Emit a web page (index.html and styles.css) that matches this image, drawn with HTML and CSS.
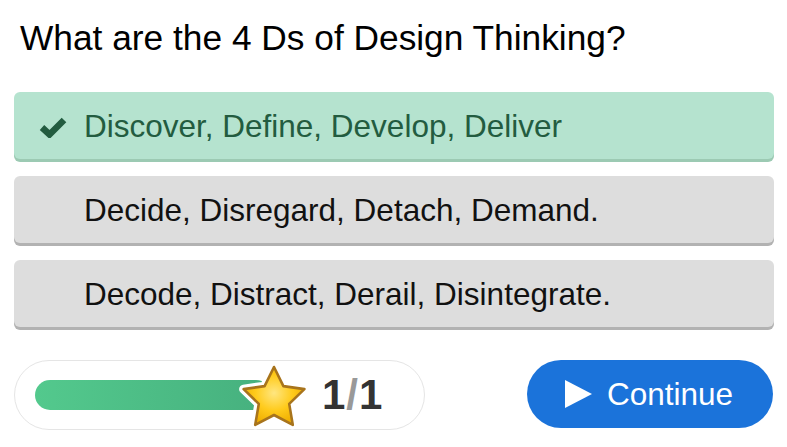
FILE: index.html
```html
<!DOCTYPE html>
<html>
<head>
<meta charset="utf-8">
<link rel="stylesheet" href="styles.css">
</head>
<body>
<div class="quiz">
  <h1 class="question">What are the 4 Ds of Design Thinking?</h1>
  <div class="options">
    <div class="option correct">
      <svg class="check" width="28" height="22" viewBox="0 0 28 22"><polyline points="3,11.5 10.5,18.5 25,4" fill="none" stroke="#235c40" stroke-width="6.5" stroke-linejoin="miter" stroke-linecap="butt"/></svg>
      <span>Discover, Define, Develop, Deliver</span>
    </div>
    <div class="option"><span>Decide, Disregard, Detach, Demand.</span></div>
    <div class="option"><span>Decode, Distract, Derail, Disintegrate.</span></div>
  </div>
  <div class="footer">
    <div class="progress">
      <div class="bar"></div>
      <svg class="star" width="66" height="63" viewBox="0 0 66 63">
        <defs>
          <radialGradient id="sg" cx="50%" cy="45%" r="55%">
            <stop offset="0" stop-color="#ffe680"/>
            <stop offset="0.55" stop-color="#ffcb1c"/>
            <stop offset="1" stop-color="#efae00"/>
          </radialGradient>
        </defs>
        <path d="M33 2 L42.4 21.1 L63.4 24.1 L48.2 38.9 L51.8 59.9 L33 50 L14.2 59.9 L17.8 38.9 L2.6 24.1 L23.6 21.1 Z" fill="#fff" stroke="#fff" stroke-width="9" stroke-linejoin="round"/>
        <path d="M33 2 L42.4 21.1 L63.4 24.1 L48.2 38.9 L51.8 59.9 L33 50 L14.2 59.9 L17.8 38.9 L2.6 24.1 L23.6 21.1 Z" fill="url(#sg)" stroke="#a8741c" stroke-width="2.6" stroke-linejoin="round"/>
      </svg>
      <div class="count">1<span class="slash">/</span>1</div>
    </div>
    <button class="continue">
      <svg class="play" width="27" height="28" viewBox="0 0 27 28"><polygon points="0,0 27,14 0,28" fill="#fff"/></svg>
      <span>Continue</span>
    </button>
  </div>
</div>
</body>
</html>
```

FILE: styles.css
```css
html, body {
  margin: 0;
  padding: 0;
  background: #fff;
}
.quiz {
  width: 787px;
  box-sizing: border-box;
  padding: 18px 13px 0 14px;
  font-family: "Liberation Sans", Arial, sans-serif;
}
.question {
  margin: 0 0 34px 6px;
  font-size: 35.3px;
  line-height: 40px;
  font-weight: normal;
  color: #000;
}
.options {
  display: flex;
  flex-direction: column;
  gap: 17px;
}
.option {
  height: 67px;
  border-radius: 6px;
  background: #dddddd;
  box-shadow: 0 3px 0 #b2b2b2;
  display: flex;
  align-items: center;
  padding-left: 70px;
  font-size: 31.5px;
  color: #111;
}
.option span {
  position: relative;
  top: 1px;
}
.option.correct {
  background: #b5e3cf;
  box-shadow: 0 3px 0 #9ccab3;
  color: #235c40;
  padding-left: 25px;
}
.check {
  margin-right: 17px;
  position: relative;
  top: 1px;
}
.footer {
  margin-top: 33px;
  display: flex;
  justify-content: space-between;
  align-items: flex-start;
}
.progress {
  width: 411px;
  height: 70px;
  box-sizing: border-box;
  border: 1px solid #e5e5e5;
  border-radius: 35px;
  display: flex;
  align-items: center;
  padding-left: 20px;
}
.bar {
  width: 236px;
  height: 30px;
  border-radius: 15px;
  background: linear-gradient(90deg, #53c98d, #46b07e);
}
.star {
  margin-left: -30px;
  position: relative;
  top: 1px;
  overflow: visible;
}
.count {
  margin-left: 15px;
  font-size: 42px;
  font-weight: bold;
  color: #333;
  line-height: 1;
}
.slash {
  color: #999;
  margin: 0 1px;
}
.continue {
  width: 246px;
  height: 68px;
  border: none;
  border-radius: 34px;
  background: #1b73da;
  color: #fff;
  font-family: "Liberation Sans", Arial, sans-serif;
  font-size: 31.5px;
  display: flex;
  align-items: center;
  padding: 0 0 0 38px;
  margin-right: 1px;
}
.play {
  margin-right: 15px;
}
```
